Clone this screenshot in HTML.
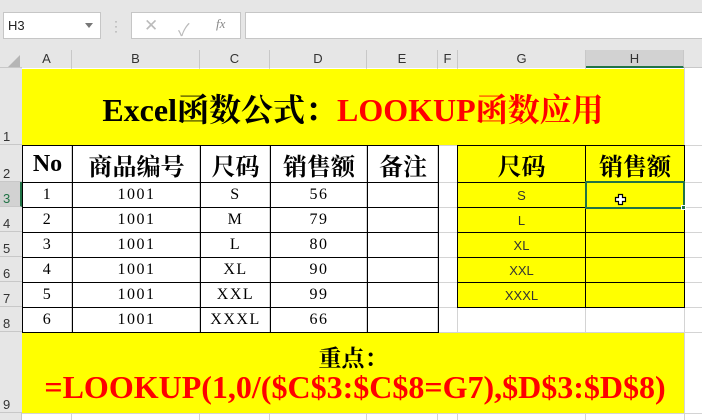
<!DOCTYPE html>
<html><head><meta charset="utf-8"><style>
*{margin:0;padding:0;box-sizing:border-box}
body{width:702px;height:420px;overflow:hidden;background:#fff;position:relative;font-family:"Liberation Sans","Noto Sans CJK SC",sans-serif}
div{position:absolute}
.vl{width:1px;background:#d4d4d4;top:68px;height:352px}
.hl{height:1px;background:#d4d4d4;left:22px;width:680px}
.ch{top:50px;height:18px;font-size:13px;color:#333;text-align:center;line-height:18px;border-right:1px solid #c8c8c8;background:#e6e6e6}
.rh{left:0;width:22px;font-size:13px;color:#333;padding-left:3px;border-bottom:1px solid #c8c8c8;background:#e6e6e6;display:flex;align-items:flex-end}
.c{border:1px solid #000;display:flex;align-items:center;justify-content:center;font-family:"Liberation Serif","Noto Serif CJK SC",serif;color:#000}
.h{font-size:24px;font-weight:bold}
.d{font-size:16px;letter-spacing:1.5px}
.y{background:#ff0;}
.g{font-family:"Liberation Sans",sans-serif;font-size:13px;color:#333}
</style></head><body>
<div style="left:0;top:0;width:702px;height:50px;background:#e6e6e6"></div>
<div style="left:3px;top:12px;width:98px;height:27px;background:#fff;border:1px solid #c6c6c6;font-size:13px;line-height:25px;padding-left:4px;color:#222">H3</div>
<div style="left:85px;top:23px;width:0;height:0;border-left:4px solid transparent;border-right:4px solid transparent;border-top:5px solid #777"></div>
<div style="left:114px;top:19px;color:#999;font-size:12px;line-height:5px">·<br>·<br>·</div>
<div style="left:131px;top:12px;width:110px;height:27px;background:#fff;border:1px solid #c6c6c6"></div>
<div style="left:144px;top:16px;color:#bbb;font-size:17px">✕</div>
<div style="left:178px;top:16px;color:#bbb;font-size:17px">✓</div>
<div style="left:216px;top:16px;color:#888;font-size:13px;font-style:italic;font-family:'Liberation Serif',serif">fx</div>
<div style="left:245px;top:12px;width:460px;height:27px;background:#fff;border:1px solid #c6c6c6"></div>
<div style="left:0;top:50px;width:702px;height:18px;background:#e6e6e6;border-bottom:1px solid #c8c8c8"></div>
<div style="left:8px;top:55px;width:0;height:0;border-left:12px solid transparent;border-bottom:12px solid #b5b5b5"></div>
<div class="ch" style="left:22px;width:50px">A</div>
<div class="ch" style="left:72px;width:128px">B</div>
<div class="ch" style="left:200px;width:70px">C</div>
<div class="ch" style="left:270px;width:97px">D</div>
<div class="ch" style="left:367px;width:71px">E</div>
<div class="ch" style="left:438px;width:20px">F</div>
<div class="ch" style="left:458px;width:128px">G</div>
<div class="ch" style="left:586px;width:98px;background:#d2d2d2;border-bottom:2px solid #217346">H</div>
<div style="left:0;top:68px;width:22px;height:352px;background:#e6e6e6;border-right:1px solid #c8c8c8"></div>
<div class="rh" style="top:68px;height:77px">1</div>
<div class="rh" style="top:145px;height:37px">2</div>
<div class="rh" style="top:182px;height:25px;background:#d2d2d2;border-right:2px solid #217346;color:#217346">3</div>
<div class="rh" style="top:207px;height:25px">4</div>
<div class="rh" style="top:232px;height:25px">5</div>
<div class="rh" style="top:257px;height:25px">6</div>
<div class="rh" style="top:282px;height:25px">7</div>
<div class="rh" style="top:307px;height:25px">8</div>
<div class="rh" style="top:332px;height:81px">9</div>
<div class="vl" style="left:71px"></div><div class="vl" style="left:199px"></div><div class="vl" style="left:269px"></div><div class="vl" style="left:366px"></div><div class="vl" style="left:437px"></div><div class="vl" style="left:457px"></div><div class="vl" style="left:585px"></div><div class="vl" style="left:684px"></div>
<div class="hl" style="top:145px"></div><div class="hl" style="top:182px"></div><div class="hl" style="top:207px"></div><div class="hl" style="top:232px"></div><div class="hl" style="top:257px"></div><div class="hl" style="top:282px"></div><div class="hl" style="top:307px"></div><div class="hl" style="top:332px"></div><div class="hl" style="top:413px"></div>
<div class="y" style="left:22px;top:69px;width:662px;height:76px;display:flex;align-items:center;justify-content:center;font-family:'Liberation Serif','Noto Serif CJK SC',serif;font-weight:bold;font-size:32px;padding-top:2px;white-space:nowrap">Excel函数公式：<span style="color:#f00">LOOKUP函数应用</span></div>
<div class="c h" style="left:22px;top:145px;width:51px;height:38px">No</div>
<div class="c h" style="left:72px;top:145px;width:129px;height:38px">商品编号</div>
<div class="c h" style="left:200px;top:145px;width:71px;height:38px">尺码</div>
<div class="c h" style="left:270px;top:145px;width:98px;height:38px">销售额</div>
<div class="c h" style="left:367px;top:145px;width:72px;height:38px">备注</div>
<div class="c d" style="left:22px;top:182px;width:51px;height:26px">1</div><div class="c d" style="left:72px;top:182px;width:129px;height:26px">1001</div><div class="c d" style="left:200px;top:182px;width:71px;height:26px">S</div><div class="c d" style="left:270px;top:182px;width:98px;height:26px">56</div><div class="c" style="left:367px;top:182px;width:72px;height:26px"></div>
<div class="c d" style="left:22px;top:207px;width:51px;height:26px">2</div><div class="c d" style="left:72px;top:207px;width:129px;height:26px">1001</div><div class="c d" style="left:200px;top:207px;width:71px;height:26px">M</div><div class="c d" style="left:270px;top:207px;width:98px;height:26px">79</div><div class="c" style="left:367px;top:207px;width:72px;height:26px"></div>
<div class="c d" style="left:22px;top:232px;width:51px;height:26px">3</div><div class="c d" style="left:72px;top:232px;width:129px;height:26px">1001</div><div class="c d" style="left:200px;top:232px;width:71px;height:26px">L</div><div class="c d" style="left:270px;top:232px;width:98px;height:26px">80</div><div class="c" style="left:367px;top:232px;width:72px;height:26px"></div>
<div class="c d" style="left:22px;top:257px;width:51px;height:26px">4</div><div class="c d" style="left:72px;top:257px;width:129px;height:26px">1001</div><div class="c d" style="left:200px;top:257px;width:71px;height:26px">XL</div><div class="c d" style="left:270px;top:257px;width:98px;height:26px">90</div><div class="c" style="left:367px;top:257px;width:72px;height:26px"></div>
<div class="c d" style="left:22px;top:282px;width:51px;height:26px">5</div><div class="c d" style="left:72px;top:282px;width:129px;height:26px">1001</div><div class="c d" style="left:200px;top:282px;width:71px;height:26px">XXL</div><div class="c d" style="left:270px;top:282px;width:98px;height:26px">99</div><div class="c" style="left:367px;top:282px;width:72px;height:26px"></div>
<div class="c d" style="left:22px;top:307px;width:51px;height:26px">6</div><div class="c d" style="left:72px;top:307px;width:129px;height:26px">1001</div><div class="c d" style="left:200px;top:307px;width:71px;height:26px">XXXL</div><div class="c d" style="left:270px;top:307px;width:98px;height:26px">66</div><div class="c" style="left:367px;top:307px;width:72px;height:26px"></div>
<div class="c h y" style="left:457px;top:145px;width:129px;height:38px">尺码</div>
<div class="c h y" style="left:585px;top:145px;width:100px;height:38px">销售额</div>
<div class="c y g" style="left:457px;top:182px;width:129px;height:26px">S</div><div class="c y" style="left:585px;top:182px;width:100px;height:26px"></div>
<div class="c y g" style="left:457px;top:207px;width:129px;height:26px">L</div><div class="c y" style="left:585px;top:207px;width:100px;height:26px"></div>
<div class="c y g" style="left:457px;top:232px;width:129px;height:26px">XL</div><div class="c y" style="left:585px;top:232px;width:100px;height:26px"></div>
<div class="c y g" style="left:457px;top:257px;width:129px;height:26px">XXL</div><div class="c y" style="left:585px;top:257px;width:100px;height:26px"></div>
<div class="c y g" style="left:457px;top:282px;width:129px;height:26px">XXXL</div><div class="c y" style="left:585px;top:282px;width:100px;height:26px"></div>
<div style="left:585px;top:181px;width:100px;height:28px;border:2px solid #217346"></div>
<div style="left:681px;top:205px;width:5px;height:5px;background:#217346;border:1px solid #fff"></div>
<svg style="position:absolute;left:614px;top:193px" width="14" height="14" viewBox="0 0 14 14"><path d="M4.5 1.5h4v3h3v4h-3v3h-4v-3h-3v-4h3z" fill="#fff" stroke="#000" stroke-width="1.2"/></svg>
<div class="y" style="left:22px;top:333px;width:662px;height:80px;font-family:'Liberation Serif','Noto Serif CJK SC',serif;font-weight:bold;text-align:center">
<div style="left:0;top:7px;width:662px;font-size:23px;color:#000">重点：</div>
<div style="left:0;top:36px;width:662px;font-size:32px;color:#f00;padding-left:4px;white-space:nowrap">=LOOKUP(1,0/($C$3:$C$8=G7),$D$3:$D$8)</div>
</div>
</body></html>
